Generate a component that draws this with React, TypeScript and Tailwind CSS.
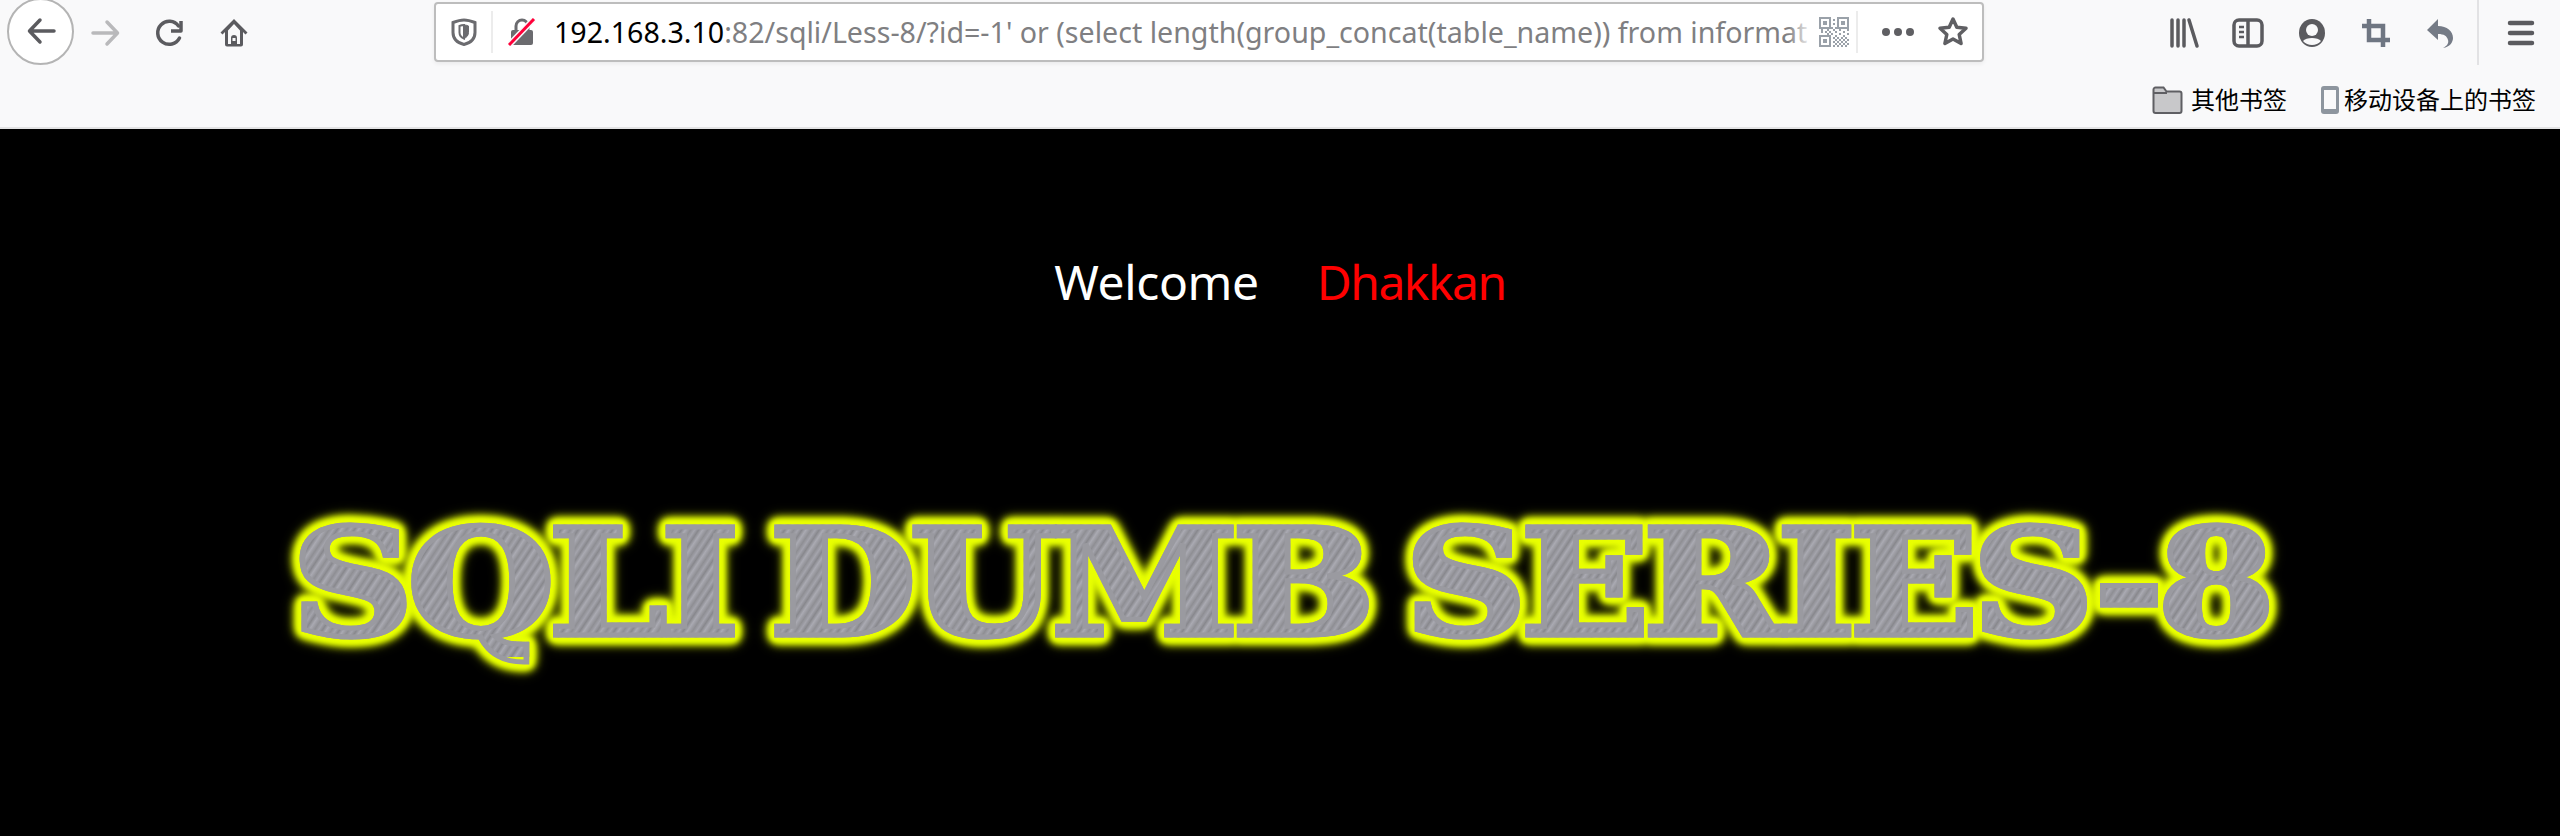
const cjk = "font-['Noto_Sans','Noto_Sans_CJK_SC',sans-serif]";

function Icon({ children, className = '' }: { children: React.ReactNode; className?: string }) {
  return (
    <svg viewBox="0 0 32 32" fill="none" className={`w-8 h-8 ${className}`}>
      {children}
    </svg>
  );
}

function NavButton({ width, children }: { width: string; children: React.ReactNode }) {
  return <div className={`flex items-center justify-center h-[64px] shrink-0 ${width}`}>{children}</div>;
}

function Toolbar() {
  return (
    <div className="flex items-center h-[65px] pl-[7px]">
      <div className="flex items-center justify-center w-[67px] h-[67px] -mt-[3px] rounded-full bg-white border-2 border-[#b4b4b4] shrink-0">
        <Icon>
          <path d="M29 16H5M15 5L4.500 16L15 27" stroke="#5b5b5f" strokeWidth="3.500" strokeLinecap="round" strokeLinejoin="round" />
        </Icon>
      </div>
      <NavButton width="w-[64px]">
        <Icon>
          <path d="M3 16h24M17 5l10.500 11L17 27" stroke="#b9b9bb" strokeWidth="3.500" strokeLinecap="round" strokeLinejoin="round" />
        </Icon>
      </NavButton>
      <NavButton width="w-[64px]">
        <Icon>
          <path d="M25.500 21a11.500 11.500 0 1 1-1-12" stroke="#5b5b5f" strokeWidth="3.500" strokeLinecap="round" />
          <path d="M27 4v10H17" stroke="#5b5b5f" strokeWidth="3.500" strokeLinejoin="round" />
        </Icon>
      </NavButton>
      <NavButton width="w-[64px]">
        <Icon>
          <path d="M16 2L2.500 15.500l2 2L7 15v12.500a2 2 0 0 0 2 2h14a2 2 0 0 0 2-2V15l2.500 2.500 2-2z" fill="#5b5b5f" />
          <path d="M16 7l6 6.500V27h-3v-6a3 3 0 0 0-6 0v6h-3V13.500z" fill="#f9f9fa" />
          <rect x="14.500" y="21" width="3" height="3" fill="#f9f9fa" />
        </Icon>
      </NavButton>
      <UrlBar />
      <div className="flex items-center ml-[168px]">
        <NavButton width="w-[64px]">
          <Icon>
            <path d="M4 3v26M10 3v26M16 3v26M21 3l8 26" stroke="#5b5b5f" strokeWidth="3.500" strokeLinecap="round" />
          </Icon>
        </NavButton>
        <NavButton width="w-[64px]">
          <Icon>
            <rect x="2" y="3" width="28" height="26" rx="5" stroke="#5b5b5f" strokeWidth="3.500" />
            <path d="M16 4v24" stroke="#5b5b5f" strokeWidth="3.500" />
            <path d="M7 10h5M7 15h5M7 20h5" stroke="#5b5b5f" strokeWidth="2.500" />
          </Icon>
        </NavButton>
        <NavButton width="w-[64px]">
          <Icon>
            <ellipse cx="16" cy="16" rx="13" ry="14" fill="#5b5b5f" />
            <circle cx="16" cy="13" r="6" fill="#f9f9fa" />
            <path d="M7 24c3-4 15-4 18 0a12 12 0 0 1-18 0z" fill="#f9f9fa" />
          </Icon>
        </NavButton>
        <NavButton width="w-[64px]">
          <Icon>
            <path d="M9 2v21h21M2 9h21v21" stroke="#6f7682" strokeWidth="4.500" />
          </Icon>
        </NavButton>
        <NavButton width="w-[62px]">
          <Icon>
            <path d="M15 2L4 13l11 10v-6c6 0 9 2 10 6 1 3-1 6-5 8 7-1 10-6 10-10 0-7-6-12-15-12z" fill="#757b86" />
          </Icon>
        </NavButton>
        <div className="w-[2px] h-[65px] bg-[#e2e2e4] ml-[7px]" />
        <NavButton width="w-[82px]">
          <Icon>
            <path d="M6 6h22M6 16h22M6 26h22" stroke="#5b5b5f" strokeWidth="4.500" strokeLinecap="round" />
          </Icon>
        </NavButton>
      </div>
    </div>
  );
}

function QrIcon() {
  const cells = [
    [9, 13], [13, 11], [15, 3], [15, 7], [11, 15], [15, 13], [9, 17], [13, 17], [17, 15], [21, 13], [25, 15], [29, 13],
    [3, 15], [7, 15], [3, 13], [17, 11], [17, 19], [21, 17], [25, 19], [29, 17],
    [15, 21], [19, 21], [23, 21], [27, 21], [17, 23], [21, 23], [25, 23], [29, 23], [15, 25], [19, 25], [23, 25], [27, 25], [17, 27], [21, 27], [25, 27], [29, 27], [15, 29], [19, 29], [23, 29], [27, 29],
  ];
  return (
    <Icon>
      {[[1, 1], [19, 1], [1, 19]].map(([x, y]) => (
        <g key={`${x}-${y}`}>
          <rect x={x + 1} y={y + 1} width="10" height="10" stroke="#9aa1a9" strokeWidth="2" />
          <rect x={x + 4} y={y + 4} width="4" height="4" fill="#9aa1a9" />
        </g>
      ))}
      {cells.map(([x, y]) => (
        <rect key={`${x}-${y}`} x={x} y={y} width="2" height="2" fill="#9aa1a9" />
      ))}
    </Icon>
  );
}

function UrlBar() {
  return (
    <div className="flex items-center w-[1550px] h-[60px] ml-[168px] -mt-[1px] shrink-0 bg-white border-2 border-[#bdbdbd] rounded-[4px] shadow-[0_2px_4px_rgba(0,0,0,0.06)]">
      <div className="flex items-center justify-center w-[57px] h-[42px] border-r-2 border-[#ececec] shrink-0">
        <svg viewBox="0 0 26 28" fill="none" className="w-[26px] h-[28px]">
          <path d="M13 2c4 0 7 1 11 2.500v10C24 21 19 25 13 26.500 7 25 2 21 2 14.500v-10C6 3 9 2 13 2z" stroke="#6b6b6f" strokeWidth="3" />
          <path d="M13 7c1.500 0 3 .3 4.500 1v6.500c0 3-2 5-4.500 6z" fill="#6b6b6f" stroke="#6b6b6f" />
          <path d="M13 7c-1.500 0-3 .3-4.500 1v6.500c0 3 2 5 4.500 6z" stroke="#6b6b6f" strokeWidth="2" />
        </svg>
      </div>
      <div className="flex items-center justify-center w-[58px] shrink-0">
        <svg viewBox="0 0 28 28" fill="none" className="w-7 h-7">
          <path d="M8 12V8a6 6 0 0 1 12 0v4" stroke="#6b6b6f" strokeWidth="3" />
          <rect x="3" y="12" width="22" height="15" rx="2" fill="#6b6b6f" />
          <path d="M1 27L26 1" stroke="#f9f9fa" strokeWidth="6" />
          <path d="M1 27L26 1" stroke="#ff0039" strokeWidth="3" />
        </svg>
      </div>
      <div className="relative flex-1 min-w-0 overflow-hidden h-full flex items-center pl-[3px]">
        <div className={`whitespace-nowrap text-[28.6px] text-[#7f7f82] ${cjk}`}>
          <span className="text-black">192.168.3.10</span>:82/sqli/Less-8/?id=-1' or (select length(group_concat(table_name)) from informat
        </div>
        <div className="absolute right-0 top-0 bottom-0 w-[24px] bg-gradient-to-r from-transparent to-white" />
      </div>
      <div className="flex items-center justify-center w-[44px] shrink-0">
        <QrIcon />
      </div>
      <div className="w-[2px] h-[42px] bg-[#ececec] shrink-0" />
      <div className="flex items-center justify-center w-[79px] shrink-0 gap-[4px]">
        <span className="w-[8px] h-[8px] rounded-full bg-[#5f5f63]" />
        <span className="w-[8px] h-[8px] rounded-full bg-[#5f5f63]" />
        <span className="w-[8px] h-[8px] rounded-full bg-[#5f5f63]" />
      </div>
      <div className="flex items-center justify-center w-[32px] mr-[13px] shrink-0">
        <Icon>
          <path d="M16 3l3.800 8.300 9.200 1-6.800 6.200 1.900 9L16 23l-8.100 4.500 1.900-9L3 12.300l9.200-1z" stroke="#5f5f63" strokeWidth="3.500" strokeLinejoin="round" />
        </Icon>
      </div>
    </div>
  );
}

function BookmarksBar() {
  return (
    <div className={`flex items-center justify-end h-[64px] pr-[24px] pt-[7px] text-[24px] text-black border-b-2 border-[#e3e3e4] ${cjk}`}>
      <svg viewBox="0 0 32 28" fill="none" className="w-8 h-7 mr-[7px]">
        <path d="M1.500 25V3.500a2 2 0 0 1 2-2h8l3 4h13a2 2 0 0 1 2 2V25a2 2 0 0 1-2 2h-24a2 2 0 0 1-2-2z" fill="#c8c8ca" stroke="#5f5f63" strokeWidth="2" />
        <path d="M2 7h13" stroke="#5f5f63" strokeWidth="2" />
      </svg>
      <span className="leading-none">其他书签</span>
      <svg viewBox="0 0 20 30" fill="none" className="w-5 h-[30px] ml-[33px] mr-[4px]">
        <rect x="1" y="1" width="18" height="28" rx="3" fill="#8d959e" />
        <rect x="4" y="5" width="12" height="19" fill="#f9f9fa" />
      </svg>
      <span className="leading-none">移动设备上的书签</span>
    </div>
  );
}

function Banner() {
  return (
    <div className="flex justify-center mt-[194px]">
      <div className="[filter:drop-shadow(0_0_2px_#eaff00)_drop-shadow(0_0_2px_#eaff00)_drop-shadow(0_0_2px_#eaff00)_drop-shadow(0_0_3px_#e6ff00)_drop-shadow(0_0_3px_#e6ff00)_drop-shadow(0_0_4px_#c8e000)]">
        <h1 className="whitespace-nowrap font-['DejaVu_Serif',serif] font-bold text-[148px] leading-none tracking-[-6px] [word-spacing:-14px] scale-x-[1.147] text-transparent bg-clip-text [-webkit-text-stroke:5px_#9a9aa0] [background-image:repeating-linear-gradient(120deg,#8f8f94_0px,#a4a4ac_3px,#88888d_6px,#aaaab2_9px,#8e8e93_13px)]">
          SQLI DUMB SERIES-8
        </h1>
      </div>
    </div>
  );
}

export default function App() {
  return (
    <div className="w-[2560px] h-[836px] overflow-hidden flex flex-col bg-black">
      <div className="bg-[#f9f9fa] shrink-0">
        <Toolbar />
        <BookmarksBar />
      </div>
      <div className="flex-1 min-h-0">
        <div className={`flex justify-center pt-[120px] text-[48px] leading-[66px] ${cjk}`}>
          <span className="text-white tracking-[-0.4px]">Welcome</span>
          <span className="text-[#ff0000] ml-[58px] tracking-[-1.5px]">Dhakkan</span>
        </div>
        <Banner />
      </div>
    </div>
  );
}
